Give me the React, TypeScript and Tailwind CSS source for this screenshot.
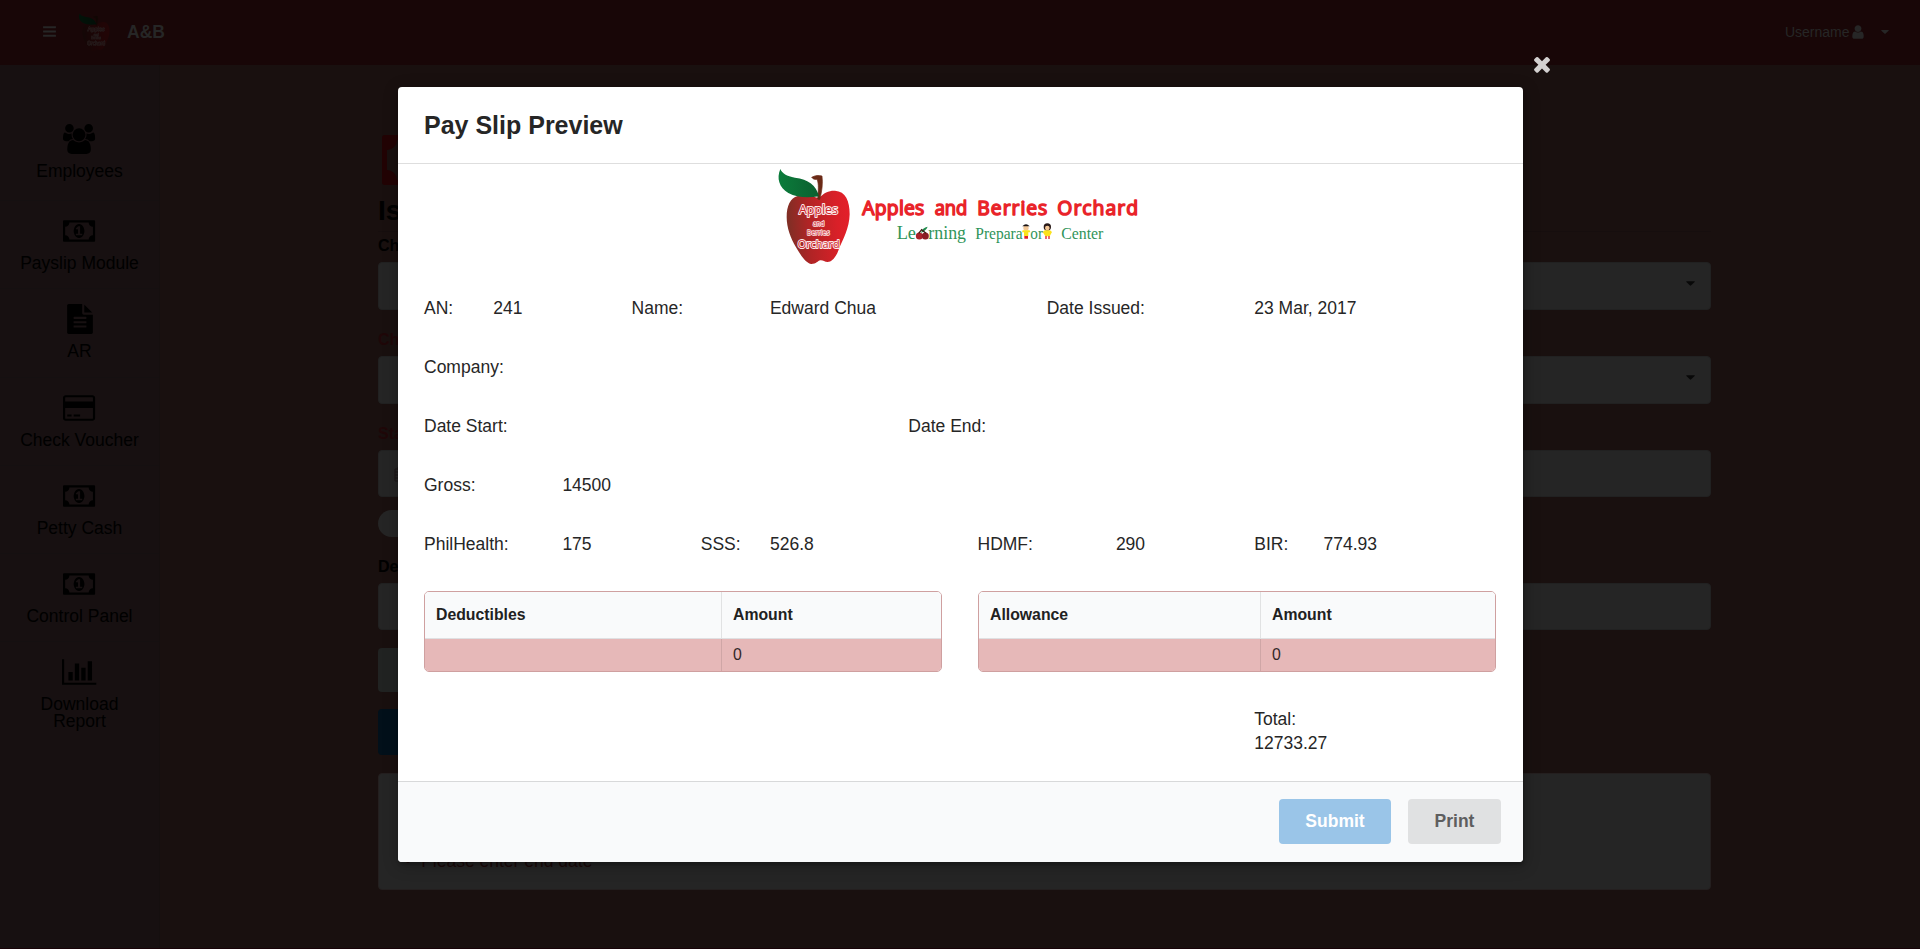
import React from 'react';

const PATHS = {
  users: {
    w: 1920,
    d: 'M593 896q-162 5-265 128h-134q-82 0-138-40.5t-56-118.5q0-353 124-353 6 0 43.5 21t97.5 42.5 119 21.5q67 0 133-23-5 37-5 66 0 139 81 256zm1071 637q0 120-73 189.5t-194 69.5h-874q-121 0-194-69.5t-73-189.5q0-53 3.5-103.5t14-109 26.5-108.5 43-97.5 62-81 85.5-53.5 111.5-20q10 0 43 21.5t73 48 107 48 135 21.5 135-21.5 107-48 73-48 43-21.5q61 0 111.5 20t85.5 53.5 62 81 43 97.5 26.5 108.5 14 109 3.5 103.5zm-1024-1277q0 106-75 181t-181 75-181-75-75-181 75-181 181-75 181 75 75 181zm704 384q0 159-112.5 271.5t-271.5 112.5-271.5-112.5-112.5-271.5 112.5-271.5 271.5-112.5 271.5 112.5 112.5 271.5zm576 225q0 78-56 118.5t-138 40.5h-134q-103-123-265-128 81-117 81-256 0-29-5-66 66 23 133 23 59 0 119-21.5t97.5-42.5 43.5-21q124 0 124 353zm-128-609q0 106-75 181t-181 75-181-75-75-181 75-181 181-75 181 75 75 181z',
  },
  money: {
    w: 1920,
    d: 'M768 1152h384v-96h-128v-448h-114l-148 137 77 80q42-37 55-57h2v288h-128v96zm512-256q0 70-21 142t-59.5 134-101.5 101-138 39-138-39-101.5-101-59.5-134-21-142 21-142 59.5-134 101.5-101 138-39 138 39 101.5 101 59.5 134 21 142zm512 256v-512q-106 0-181-75t-75-181h-1152q0 106-75 181t-181 75v512q106 0 181 75t75 181h1152q0-106 75-181t181-75zm128-832v1152q0 26-19 45t-45 19h-1792q-26 0-45-19t-19-45v-1152q0-26 19-45t45-19h1792q26 0 45 19t19 45z',
  },
  file: {
    w: 1792,
    d: 'M1596 476q14 14 28 36h-472v-472q22 14 36 28zm-476 164h544v1056q0 40-28 68t-68 28h-1344q-40 0-68-28t-28-68v-1600q0-40 28-68t68-28h800v544q0 40 28 68t68 28zm160 736v-64q0-14-9-23t-23-9h-704q-14 0-23 9t-9 23v64q0 14 9 23t23 9h704q14 0 23-9t9-23zm0-256v-64q0-14-9-23t-23-9h-704q-14 0-23 9t-9 23v64q0 14 9 23t23 9h704q14 0 23-9t9-23zm0-256v-64q0-14-9-23t-23-9h-704q-14 0-23 9t-9 23v64q0 14 9 23t23 9h704q14 0 23-9t9-23z',
  },
  card: {
    w: 1920,
    d: 'M1760 128q66 0 113 47t47 113v1216q0 66-47 113t-113 47h-1600q-66 0-113-47t-47-113v-1216q0-66 47-113t113-47h1600zm-1600 128q-13 0-22.5 9.5t-9.5 22.5v224h1664v-224q0-13-9.5-22.5t-22.5-9.5h-1600zm1600 1280q13 0 22.5-9.5t9.5-22.5v-608h-1664v608q0 13 9.5 22.5t22.5 9.5h1600zm-1504-128v-128h256v128h-256zm384 0v-128h384v128h-384z',
  },
  chart: {
    w: 2048,
    d: 'M640 896v512h-256v-512h256zm384-512v1024h-256v-1024h256zm1024 1152v128h-2048v-1536h128v1408h1920zm-640-896v768h-256v-768h256zm384-384v1152h-256v-1152h256z',
  },
  user: {
    w: 1792,
    d: 'M1536 1399q0 109-62.5 187t-150.5 78h-854q-88 0-150.5-78t-62.5-187q0-85 8.5-160.5t31.5-152 58.5-131 94-89 134.5-34.5q131 128 313 128t313-128q76 0 134.5 34.5t94 89 58.5 131 31.5 152 8.5 160.5zm-256-887q0 159-112.5 271.5t-271.5 112.5-271.5-112.5-112.5-271.5 112.5-271.5 271.5-112.5 271.5 112.5 112.5 271.5z',
  },
  close: {
    w: 1792,
    d: 'M1490 1322q0 40-28 68l-136 136q-28 28-68 28t-68-28l-294-294-294 294q-28 28-68 28t-68-28l-136-136q-28-28-28-68t28-68l294-294-294-294q-28-28-28-68t28-68l136-136q28-28 68-28t68 28l294 294 294-294q28-28 68-28t68 28l136 136q28 28 28 68t-28 68l-294 294 294 294q28 28 28 68z',
  },
  bars: {
    w: 1792,
    d: 'M1664 1344v128q0 26-19 45t-45 19h-1408q-26 0-45-19t-19-45v-128q0-26 19-45t45-19h1408q26 0 45 19t19 45zm0-512v128q0 26-19 45t-45 19h-1408q-26 0-45-19t-19-45v-128q0-26 19-45t45-19h1408q26 0 45 19t19 45zm0-512v128q0 26-19 45t-45 19h-1408q-26 0-45-19t-19-45v-128q0-26 19-45t45-19h1408q26 0 45 19t19 45z',
  },
};

type IconName = keyof typeof PATHS;

function Icon({ name, className }: { name: IconName; className: string }) {
  const { w, d } = PATHS[name];
  return (
    <svg viewBox={`0 0 ${w} 1792`} className={className} fill="currentColor">
      <path d={d} />
    </svg>
  );
}

function Caret({ className }: { className: string }) {
  return (
    <svg viewBox="0 0 10 5" className={className} fill="currentColor">
      <path d="M0.6 0h8.8q.6.3.2.8L5.4 4.8q-.4.3-.8 0L.4.8Q0 .3.6 0z" />
    </svg>
  );
}

function AppleMark({ id }: { id: string }) {
  return (
    <g>
      <defs>
        <linearGradient id={`${id}-body`} x1="0" x2="1" y1="0.5" y2="0.42">
          <stop offset="0" stopColor="#7c2f25" />
          <stop offset="0.35" stopColor="#b02425" />
          <stop offset="0.8" stopColor="#d92028" />
          <stop offset="1" stopColor="#e31f29" />
        </linearGradient>
        <linearGradient id={`${id}-leaf`} x1="0" x2="1">
          <stop offset="0" stopColor="#0b7c3b" />
          <stop offset="1" stopColor="#0c5f30" />
        </linearGradient>
      </defs>
      <path
        d="M178 130C192 112 210 106 226 107C258 109 270 138 270 178C269 220 250 252 237 284C229 306 217 321 204 321C194 321 190 315 182 316C174 318 170 327 155 327C140 325 124 303 109 277C93 249 81 219 81 186C81 153 92 128 114 123C138 119 160 124 178 130Z"
        fill={`url(#${id}-body)`}
      />
      <path d="M156 67C166 61 178 60 187 63C190 84 187 110 180 134L174 132C176 108 178 86 172 73C167 74 161 74 156 67Z" fill="#6b2a17" stroke="#6b2a17" strokeWidth="2" />
      <path d="M62 42C68 56 80 63 106 68C146 73 170 90 178 124C148 129 112 129 86 114C58 97 50 70 62 42Z" fill={`url(#${id}-leaf)`} />
      <g fontFamily="'Open Sans', sans-serif" fontWeight="400" fill="#d0262c" stroke="#fbe9e9" strokeLinejoin="round" paintOrder="stroke">
        <text x="118" y="176" fontSize="37" strokeWidth="6" textLength="117" lengthAdjust="spacingAndGlyphs">Apples</text>
        <text x="160" y="214" fontSize="20" strokeWidth="4.5" textLength="34" lengthAdjust="spacingAndGlyphs">and</text>
        <text x="142" y="239" fontSize="22" strokeWidth="4.5" textLength="68" lengthAdjust="spacingAndGlyphs">Berries</text>
        <text x="114" y="279" fontSize="35" strokeWidth="6" textLength="126" lengthAdjust="spacingAndGlyphs">Orchard</text>
      </g>
    </g>
  );
}

function Logo() {
  return (
    <svg viewBox="46 27 1116 300" className="mx-auto block h-[100px] w-[372px] overflow-visible">
      <AppleMark id="logo" />
      <g fontFamily="'Open Sans', sans-serif" fontSize="58" fill="#e9242a" stroke="#e9242a" strokeWidth="4.5" strokeLinejoin="round" strokeLinecap="round" fontWeight="400">
        <text x="308" y="179" textLength="186" lengthAdjust="spacing">Apples</text>
        <text x="525" y="179" textLength="98" lengthAdjust="spacingAndGlyphs">and</text>
        <text x="653" y="179" textLength="210" lengthAdjust="spacing">Berries</text>
        <text x="893" y="179" textLength="242" lengthAdjust="spacing">Orchard</text>
      </g>
      <g fontFamily="'Liberation Serif', serif" fill="#2f9459">
        <text x="411" y="252" fontSize="56" textLength="58" lengthAdjust="spacingAndGlyphs">Le</text>
        <text x="506" y="252" fontSize="56" textLength="113" lengthAdjust="spacingAndGlyphs">rning</text>
        <text x="647" y="252" fontSize="47" textLength="142" lengthAdjust="spacingAndGlyphs">Prepara</text>
        <text x="812" y="252" fontSize="47" textLength="38" lengthAdjust="spacingAndGlyphs">or</text>
        <text x="905" y="251" fontSize="50" textLength="126" lengthAdjust="spacingAndGlyphs">Center</text>
      </g>
      <path d="M484 234Q488 217 504 215Q499 227 484 234Z" fill="#1f8a4c" />
      <circle cx="479" cy="243" r="10.5" fill="#a8222a" />
      <circle cx="497" cy="243" r="10.5" fill="#8c1d24" />
      <path d="M477 235L486 224L499 235" fill="none" stroke="#3b2016" strokeWidth="4" />
      <g>
        <circle cx="799" cy="219" r="8" fill="#f3c796" />
        <path d="M788 214Q799 202 810 214Z" fill="#1b1414" />
        <path d="M789 226H810L812 232H806V243H793V232H787Z" fill="#fbe21b" />
        <path d="M794 243H805V251H794Z" fill="#e22028" />
      </g>
      <g>
        <circle cx="863" cy="216" r="11" fill="#2a1a18" />
        <circle cx="863" cy="219" r="7" fill="#f3c796" />
        <path d="M855 226H871L877 231L870 244H857L849 231Z" fill="#fbe21b" />
        <path d="M857 243H861V252H857ZM866 243H870V252H866Z" fill="#e22028" />
      </g>
    </svg>
  );
}

const MENU: { icon: IconName; label: string; size: string; box: string }[] = [
  { icon: 'users', label: 'Employees', size: 'w-[32.1px]', box: 'h-[92px] border-[#151011]' },
  { icon: 'money', label: 'Payslip Module', size: 'w-[32.1px]', box: 'h-[88px] border-[#151011]' },
  { icon: 'file', label: 'AR', size: 'w-[30px]', box: 'h-[88.5px] border-[#151011]' },
  { icon: 'card', label: 'Check Voucher', size: 'w-[32.1px]', box: 'h-[88.5px] border-[#151011]' },
  { icon: 'money', label: 'Petty Cash', size: 'w-[32.1px]', box: 'h-[88px] border-[#151011]' },
  { icon: 'money', label: 'Control Panel', size: 'w-[32.1px]', box: 'h-[88px] border-[#151011]' },
  { icon: 'chart', label: 'Download Report', size: 'w-[34.3px]', box: 'h-[105px] border-transparent' },
];

const FIELD = 'rounded-[4px] border border-[#212121] bg-[#252525]';

const ROWS: { text: string; at: string }[][] = [
  [
    { text: 'AN:', at: 'col-start-1' },
    { text: '241', at: 'col-start-2' },
    { text: 'Name:', at: 'col-start-4' },
    { text: 'Edward Chua', at: 'col-start-6' },
    { text: 'Date Issued:', at: 'col-start-10' },
    { text: '23 Mar, 2017', at: 'col-start-13' },
  ],
  [{ text: 'Company:', at: 'col-start-1' }],
  [
    { text: 'Date Start:', at: 'col-start-1' },
    { text: 'Date End:', at: 'col-start-8' },
  ],
  [
    { text: 'Gross:', at: 'col-start-1' },
    { text: '14500', at: 'col-start-3' },
  ],
  [
    { text: 'PhilHealth:', at: 'col-start-1' },
    { text: '175', at: 'col-start-3' },
    { text: 'SSS:', at: 'col-start-5' },
    { text: '526.8', at: 'col-start-6' },
    { text: 'HDMF:', at: 'col-start-9' },
    { text: '290', at: 'col-start-11' },
    { text: 'BIR:', at: 'col-start-13' },
    { text: '774.93', at: 'col-start-14' },
  ],
];

function AmountTable({ title, cols }: { title: string; cols: string }) {
  return (
    <div className="h-[81px] w-[518px] overflow-hidden rounded-[5px] border border-[#cfa0a0] text-[15.8px] text-[#212121]">
      <div className={`grid h-[47px] border-b border-[#dfe0e2] bg-[#f9fafb] font-bold ${cols}`}>
        <div className="flex items-center px-[11px]">{title}</div>
        <div className="flex items-center border-l border-[#e1e2e3] px-[11px]">Amount</div>
      </div>
      <div className={`grid h-8 bg-[#e6b8b8] ${cols}`}>
        <div />
        <div className="flex items-center border-l border-[#cfa6a6] px-[11px] text-[#332828]">0</div>
      </div>
    </div>
  );
}

export default function App() {
  return (
    <div className="relative flex h-[949px] w-[1920px] flex-col overflow-hidden bg-[#19100f] font-['Liberation_Sans',Arial,sans-serif]">
      <header className="flex h-[65px] shrink-0 items-center bg-[#180607] pb-[2px] text-[#262626]">
        <Icon name="bars" className="ml-[41.5px] h-[15px] w-[15px]" />
        <svg viewBox="50 30 230 305" preserveAspectRatio="none" className="ml-[21.5px] h-[40px] w-[33px] brightness-[0.15]">
          <AppleMark id="brand" />
        </svg>
        <div className="ml-[16px] text-[17.5px] leading-6 font-bold">A&amp;B</div>
        <div className="ml-auto pt-px text-[14px] leading-5">Username</div>
        <Icon name="user" className="h-4 w-4" />
        <Caret className="mt-px mr-[31px] ml-[15.5px] h-[4px] w-[8px]" />
      </header>

      <div className="flex flex-1">
        <nav className="flex w-[160px] shrink-0 flex-col border-r border-[#150f0f] bg-[#171011] pt-[44px] text-black">
          {MENU.map((m) => (
            <div key={m.label} className={`flex flex-col items-center border-b pt-[15px] ${m.box}`}>
              <Icon name={m.icon} className={`h-[30px] shrink-0 ${m.size}`} />
              <div className="mt-[9px] w-[122px] text-center text-[17.5px] leading-[17px]">{m.label}</div>
            </div>
          ))}
        </nav>

        <main className="ml-[218px] flex w-[1333px] flex-col items-start text-[16px] font-bold text-black">
          <Icon name="money" className="mt-[60px] ml-1 h-[70px] w-[75px] text-[#220304]" />
          <div className="flex h-[37px] w-full items-start border-b border-[#160e0e] text-[28px] leading-8">Issue</div>
          <div className="mt-[3px] h-[27px] pt-[2px] leading-[18px]">Choose</div>
          <div className={`flex h-12 w-full justify-end pt-[18px] pr-[15px] text-[#080808] ${FIELD}`}>
            <Caret className="h-[5px] w-[9px]" />
          </div>
          <div className="h-[46px] pt-[20px] leading-[20px] text-[#1f0708]">Choose</div>
          <div className={`flex h-12 w-full justify-end pt-[18px] pr-[15px] text-[#080808] ${FIELD}`}>
            <Caret className="h-[5px] w-[9px]" />
          </div>
          <div className="h-[46px] pt-[20px] leading-[20px] text-[#1f0708]">Start</div>
          <div className={`flex h-[47px] w-full items-center pl-[15px] ${FIELD}`}>
            <svg viewBox="0 0 14 16" className="h-4 w-[14px] text-[#1a1516]" fill="none" stroke="currentColor">
              <path d="M1 3h12v12H1zM1 6h12M1 9h12M1 12h12M5 6v9M9 6v9M4 1v3M10 1v3" />
            </svg>
          </div>
          <div className="mt-[13px] h-[27px] w-[60px] rounded-full bg-[#252525]" />
          <div className="h-[46px] pt-[20px] leading-[20px]">Deductions</div>
          <div className={`h-[47px] w-full ${FIELD}`} />
          <div className="mt-[18px] h-11 w-[300px] rounded-[4px] bg-[#212322]" />
          <div className="mt-[17px] h-[46px] w-[300px] rounded-[4px] bg-[#02101a]" />
          <div className="mt-[18px] flex h-[117px] w-full items-end rounded-[4px] border border-[#241f1f] bg-[#252525] pb-[16px] pl-[26px] text-[17.5px] leading-[24px] font-normal text-[#1b0a0a]">
            <span className="mr-[10px]">•</span>Please enter end date
          </div>
        </main>
      </div>
      <footer className="h-px shrink-0 bg-[#180308]" />

      <div className="absolute top-0 left-0 flex h-full w-full justify-center">
        <Icon name="close" className="absolute top-[52px] left-[1530px] h-[24px] w-[24px] text-[#d3d0d0]" />
        <section className="mt-[87px] ml-px flex h-[775px] w-[1125px] flex-col overflow-hidden rounded-[4px] bg-white text-[17.5px] leading-6 text-[#262626] shadow-[1px_3px_3px_0_rgba(0,0,0,0.2),1px_3px_15px_2px_rgba(0,0,0,0.2)]">
          <h1 className="flex h-[77px] shrink-0 items-center border-b border-[#dedede] px-[26px] text-[25px] leading-8 font-bold">
            Pay Slip Preview
          </h1>
          <Logo />
          <div className="mt-8 flex flex-1 flex-col gap-[35px] px-[26px]">
            {ROWS.map((row, i) => (
              <div key={i} className="grid h-6 grid-cols-[repeat(16,69.2px)] whitespace-nowrap">
                {row.map((c) => (
                  <span key={c.text} className={`row-start-1 w-0 ${c.at}`}>
                    {c.text}
                  </span>
                ))}
              </div>
            ))}
            <div className="flex gap-9">
              <AmountTable title="Deductibles" cols="grid-cols-[296px_1fr]" />
              <AmountTable title="Allowance" cols="grid-cols-[281px_1fr]" />
            </div>
            <div className="grid grid-cols-[repeat(16,69.2px)]">
              <div className="col-span-3 col-start-13">
                <div>Total:</div>
                <div>12733.27</div>
              </div>
            </div>
          </div>
          <div className="flex h-[81px] shrink-0 items-start justify-end gap-[17px] border-t border-[#d8d9da] bg-[#f9fafb] pt-[17px] pr-[22px] font-bold">
            <button className="h-[45px] w-[112px] rounded-[4px] bg-[#9ac5e8] pb-[2px] text-white">Submit</button>
            <button className="h-[45px] w-[93px] rounded-[4px] bg-[#e0e1e2] pb-[2px] text-[#5e5e5f]">Print</button>
          </div>
        </section>
      </div>
    </div>
  );
}
